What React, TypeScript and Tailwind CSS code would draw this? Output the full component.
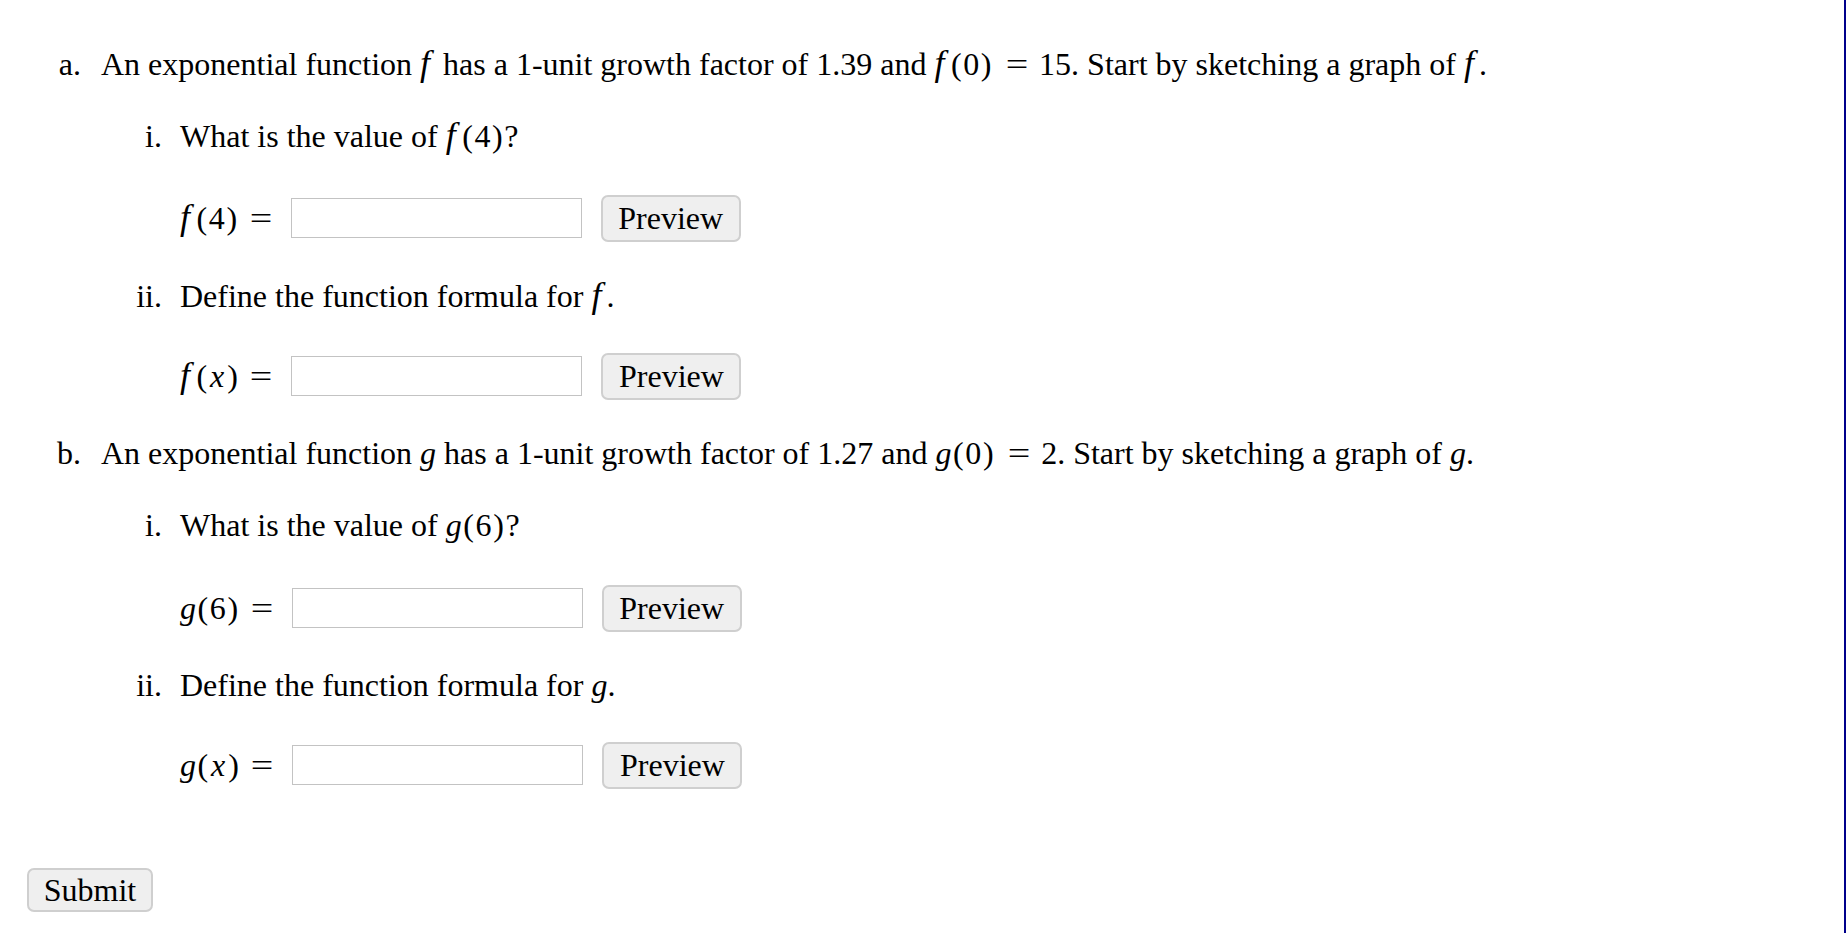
import React from "react";

function F({ children }: { children: React.ReactNode }) {
  return <i className="italic text-[1.12em] leading-none pr-[0.14em]">{children}</i>;
}

function G({ children }: { children: React.ReactNode }) {
  return <i className="italic">{children}</i>;
}

function P({ children }: { children: React.ReactNode }) {
  return <span className="px-[0.05em]">{children}</span>;
}

function X() {
  return <i className="italic px-[0.04em]">x</i>;
}

function Eq({ row }: { row?: boolean }) {
  return (
    <span
      className={`inline-block w-[22px] text-center scale-x-[1.25] ${row ? "ml-[11px]" : "ml-[13px] mr-[11px]"}`}
    >
      =
    </span>
  );
}

function Row({ label, mt }: { label: React.ReactNode; mt: string }) {
  return (
    <div className={`flex items-center h-[48px] pl-[180px] ${mt}`}>
      <span className="whitespace-nowrap">{label}</span>
      <input
        type="text"
        className="ml-[19px] w-[291px] h-[40px] border border-[#c3c3c3] bg-white outline-none"
      />
      <button className="ml-[19px] w-[140px] h-[47px] rounded-[7px] border-2 border-[#cfcfcf] bg-[#efefef] text-[32px] leading-none text-black">
        Preview
      </button>
    </div>
  );
}

function Main({ marker, children, mt }: { marker: string; children: React.ReactNode; mt: string }) {
  return (
    <div className={`flex h-[36px] items-center whitespace-nowrap ${mt}`}>
      <span className="w-[81px] text-right">{marker}</span>
      <span className="ml-[20px]">{children}</span>
    </div>
  );
}

function Sub({ marker, children, mt }: { marker: string; children: React.ReactNode; mt: string }) {
  return (
    <div className={`flex h-[36px] items-center whitespace-nowrap ${mt}`}>
      <span className="w-[162px] text-right">{marker}</span>
      <span className="ml-[18px]">{children}</span>
    </div>
  );
}

export default function App() {
  return (
    <div className="w-[1846px] h-[933px] bg-white flex overflow-hidden">
      <div className="flex-1 flex flex-col pt-[46px] font-['Liberation_Serif',serif] text-[32px] text-black">
        <Main marker="a." mt="mt-0">
          An exponential function <F>f</F> has a 1-unit growth factor of 1.39 and <F>f</F>
          <P>(</P>0<P>)</P>
          <Eq />
          15. Start by sketching a graph of <F>f</F>.
        </Main>
        <Sub marker="i." mt="mt-[36px]">
          What is the value of <F>f</F>
          <P>(</P>4<P>)</P>?
        </Sub>
        <Row
          mt="mt-[40px]"
          label={
            <>
              <F>f</F>
              <P>(</P>4<P>)</P>
              <Eq row />
            </>
          }
        />
        <Sub marker="ii." mt="mt-[36px]">
          Define the function formula for <F>f</F>.
        </Sub>
        <Row
          mt="mt-[38px]"
          label={
            <>
              <F>f</F>
              <P>(</P>
              <X />
              <P>)</P>
              <Eq row />
            </>
          }
        />
        <Main marker="b." mt="mt-[35px]">
          An exponential function <G>g</G> has a 1-unit growth factor of 1.27 and <G>g</G>
          <P>(</P>0<P>)</P>
          <Eq />
          2. Start by sketching a graph of <G>g</G>.
        </Main>
        <Sub marker="i." mt="mt-[36px]">
          What is the value of <G>g</G>
          <P>(</P>6<P>)</P>?
        </Sub>
        <Row
          mt="mt-[41px]"
          label={
            <>
              <G>g</G>
              <P>(</P>6<P>)</P>
              <Eq row />
            </>
          }
        />
        <Sub marker="ii." mt="mt-[35px]">
          Define the function formula for <G>g</G>.
        </Sub>
        <Row
          mt="mt-[38px]"
          label={
            <>
              <G>g</G>
              <P>(</P>
              <X />
              <P>)</P>
              <Eq row />
            </>
          }
        />
        <div className="mt-[77px] pl-[27px]">
          <button className="w-[126px] h-[44px] rounded-[7px] border-2 border-[#cfcfcf] bg-[#efefef] text-[32px] leading-none text-black">
            Submit
          </button>
        </div>
      </div>
      <div className="w-[2px] h-full bg-[#00008b]" />
    </div>
  );
}
